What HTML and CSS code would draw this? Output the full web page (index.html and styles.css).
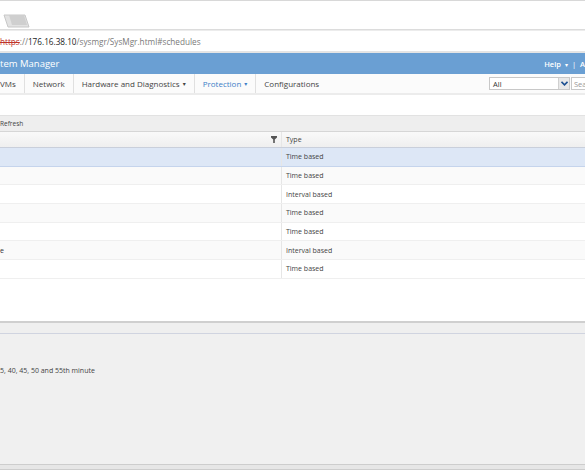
FILE: index.html
```html
<!DOCTYPE html>
<html lang="en">
<head>
  <meta charset="UTF-8">
  <title>System Manager</title>
  <link rel="stylesheet" href="styles.css">
</head>
<body>
  <div class="tabstrip">
    <svg class="tab-shape" width="30" height="16" viewBox="0 0 30 16">
      <path d="M1 2 L5 14 L26 14 L22 2 Z" fill="#e2e2e2" stroke="#c8c8c8" stroke-width="1"/>
      <path d="M6 2 L21 2 L24 12 L9 12 Z" fill="#cfcfcf"/>
    </svg>
  </div>

  <div class="urlbar">
    <span class="url-scheme">https</span><span class="url-rest">://</span><span class="url-host">176.16.38.10</span><span class="url-rest">/sysmgr/SysMgr.html#schedules</span>
  </div>

  <div class="app-header">
    <div class="app-title">tem Manager</div>
    <div class="app-links">
      <span>Help <span class="caret">&#9662;</span></span>
      <span class="pipe">|</span>
      <span>A</span>
    </div>
  </div>

  <div class="nav">
    <div class="nav-item first">VMs</div>
    <div class="nav-item">Network</div>
    <div class="nav-item">Hardware and Diagnostics <span class="caret">&#9662;</span></div>
    <div class="nav-item active">Protection <span class="caret">&#9662;</span></div>
    <div class="nav-item last">Configurations</div>
    <div class="nav-search">
      <div class="scope-select">
        <span>All</span>
        <span class="scope-btn">
          <svg width="7" height="5" viewBox="0 0 7 5"><path d="M0.5 0.8 L3.5 3.8 L6.5 0.8" fill="none" stroke="#1d4f91" stroke-width="1.6"/></svg>
        </span>
      </div>
      <div class="search-box">Sea</div>
    </div>
  </div>

  <div class="page-gap"></div>

  <div class="toolbar">Refresh</div>

  <div class="grid">
    <div class="grid-head">
      <div class="col-name">
        <svg class="filter-icon" width="6" height="7" viewBox="0 0 6 7"><path d="M0 0 H6 V1.4 L3.8 3.4 V7 H2.2 V3.4 L0 1.4 Z" fill="#555"/></svg>
      </div>
      <div class="col-type">Type</div>
    </div>
    <div class="grid-row selected"><div class="col-name"></div><div class="col-type">Time based</div></div>
    <div class="grid-row alt"><div class="col-name"></div><div class="col-type">Time based</div></div>
    <div class="grid-row"><div class="col-name"></div><div class="col-type">Interval based</div></div>
    <div class="grid-row alt"><div class="col-name"></div><div class="col-type">Time based</div></div>
    <div class="grid-row"><div class="col-name"></div><div class="col-type">Time based</div></div>
    <div class="grid-row alt"><div class="col-name">e</div><div class="col-type">Interval based</div></div>
    <div class="grid-row"><div class="col-name"></div><div class="col-type">Time based</div></div>
  </div>

  <div class="grid-fill"></div>

  <div class="detail">
    <div class="detail-bar"></div>
    <div class="detail-body">
      <div class="detail-text">5, 40, 45, 50 and 55th minute</div>
    </div>
  </div>

  <div class="status-bar"></div>
</body>
</html>
```

FILE: styles.css
```css
html, body {
  margin: 0;
  height: 100%;
}

body {
  width: 585px;
  height: 470px;
  overflow: hidden;
  font-family: "Open Sans", "DejaVu Sans", sans-serif;
  font-size: 8px;
  color: #333;
  background: #fff;
  display: flex;
  flex-direction: column;
}

/* browser chrome */
.tabstrip {
  height: 30px;
  flex: none;
  border-top: 1px solid #d8d8d8;
  border-bottom: 1px solid #dcdcdc;
  background: #fff;
  box-sizing: border-box;
  display: flex;
  align-items: flex-end;
}

.tab-shape {
  display: block;
  margin-left: 3px;
  margin-bottom: 0;
}

.urlbar {
  height: 23px;
  flex: none;
  border-top: 1px solid #ececec;
  border-bottom: 2px solid #e4e4e4;
  box-sizing: border-box;
  padding-top: 5px;
  font-size: 8.2px;
  color: #7a7a7a;
  white-space: nowrap;
}

.url-scheme {
  color: #c0332b;
  text-decoration: line-through;
}

.url-host {
  color: #222;
}

/* app header */
.app-header {
  height: 21px;
  flex: none;
  background: #6a9fd3;
  color: #fff;
  display: flex;
  align-items: center;
  justify-content: space-between;
}

.app-title {
  font-size: 9.5px;
}

.app-links {
  font-size: 7.5px;
  font-weight: 600;
  display: flex;
  gap: 4px;
  white-space: nowrap;
}

.app-links .caret {
  font-size: 6px;
  margin-left: 2px;
}

.app-links .pipe {
  font-weight: 400;
}

.nav {
  height: 21px;
  flex: none;
  background: #fbfbfb;
  border-bottom: 2px solid #ececec;
  box-sizing: border-box;
  display: flex;
  align-items: stretch;
}

.nav-item {
  display: flex;
  align-items: center;
  padding: 0 8px;
  border-right: 1px solid #e0e0e0;
  font-size: 8px;
  color: #444;
  white-space: nowrap;
}

.nav-item.first {
  padding-left: 0;
  padding-right: 8px;
}

.nav-item.last {
  border-right: none;
}

.nav-item.active {
  color: #3d7fc7;
}

.nav-item .caret {
  font-size: 6px;
  margin-left: 3px;
}

.nav-search {
  margin-left: auto;
  display: flex;
  align-items: center;
  gap: 1px;
}

.scope-select {
  width: 81px;
  height: 13px;
  border: 1px solid #c8c8c8;
  background: #fff;
  box-sizing: border-box;
  display: flex;
  align-items: center;
  justify-content: space-between;
  padding-left: 3px;
  font-size: 7.5px;
  color: #333;
}

.scope-btn {
  width: 10px;
  height: 11px;
  background: #e8e8e8;
  border-left: 1px solid #d0d0d0;
  display: flex;
  align-items: center;
  justify-content: center;
}

.search-box {
  width: 14px;
  height: 13px;
  padding-left: 2px;
  font-size: 7.5px;
  color: #999;
  line-height: 13px;
  overflow: hidden;
  border-left: 1px solid #c8c8c8;
  border-top: 1px solid #c8c8c8;
  border-bottom: 1px solid #c8c8c8;
  box-sizing: border-box;
  background: #fff;
}

.page-gap {
  height: 20px;
  flex: none;
}

/* grid */
.toolbar {
  height: 17px;
  flex: none;
  background: #eeeeee;
  border-top: 1px solid #e2e2e2;
  border-bottom: 1px solid #d6d6d6;
  box-sizing: border-box;
  font-size: 6.5px;
  color: #444;
  line-height: 16px;
}

.grid {
  flex: none;
}

.grid-head,
.grid-row {
  display: flex;
}

.grid-head {
  height: 16px;
  background: linear-gradient(#f9f9f9, #efefef);
  border-bottom: 1px solid #c9cfdb;
  box-sizing: border-box;
}

.grid-row {
  height: 18.7px;
  border-bottom: 1px solid #efefef;
  box-sizing: border-box;
  background: #fff;
}

.grid-row.alt {
  background: #fafafa;
}

.grid-row.selected {
  background: #dde7f6;
  border-bottom-color: #c5d4ec;
}

.col-name {
  width: 282px;
  border-right: 1px solid #e6e6e6;
  box-sizing: border-box;
  display: flex;
  align-items: center;
  justify-content: flex-end;
  padding-right: 4px;
  font-size: 7px;
}

.grid-row .col-name {
  justify-content: flex-start;
  padding-right: 0;
}

.col-type {
  flex: 1;
  display: flex;
  align-items: center;
  padding-left: 4px;
  font-size: 7px;
  color: #444;
}

.grid-fill {
  height: 42px;
  flex: none;
}

/* detail panel */
.detail {
  flex: 1;
  display: flex;
  flex-direction: column;
  border-top: 2px solid #cfcfcf;
  background: #f0f0f0;
}

.detail-bar {
  height: 10px;
  border-bottom: 1px solid #d0d4e0;
  background: #efefef;
}

.detail-body {
  flex: 1;
  padding-top: 32px;
}

.detail-text {
  font-size: 7px;
  color: #444;
}

.status-bar {
  height: 6px;
  flex: none;
  border-top: 1px solid #cdcdcd;
  border-bottom: 1px solid #cdcdcd;
  background: #e6e6e6;
  box-sizing: border-box;
}
```
